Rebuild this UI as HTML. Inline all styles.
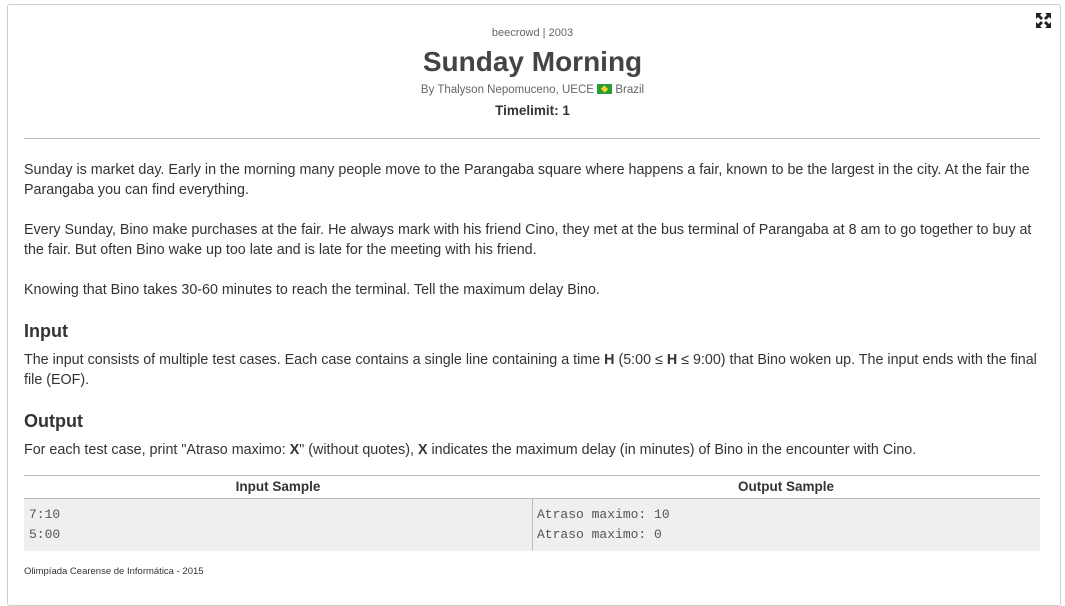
<!DOCTYPE html>
<html><head><meta charset="utf-8"><style>
body{margin:0;background:#fff;font-family:"Liberation Sans",sans-serif;color:#333;overflow:hidden;}
.box{position:absolute;left:7px;top:4px;width:1052px;height:600px;border:1px solid #ccc;border-radius:3px;}
.c{position:absolute;left:0;width:1065px;text-align:center;}
p{position:absolute;left:24px;width:1030px;margin:0;font-size:14.3px;line-height:20px;white-space:nowrap;}
h3{position:absolute;left:24px;margin:0;font-size:18px;font-weight:bold;color:#333;}
.mono{font-family:"Liberation Mono",monospace;font-size:13px;color:#555;}
</style></head><body>
<div class="box"></div>
<svg style="position:absolute;left:1036px;top:13px" width="15" height="15" viewBox="0 0 15 15" fill="#222"><path d="M0 0h6l-2 2 3 3-2 2-3-3-2 2zM15 0v6l-2-2-3 3-2-2 3-3-2-2zM0 15v-6l2 2 3-3 2 2-3 3 2 2zM15 15h-6l2-2-3-3 2-2 3 3 2-2z"/></svg>
<div class="c" style="top:27px;font-size:11px;color:#666">beecrowd | 2003</div>
<div class="c" style="top:46px;font-size:28px;font-weight:bold;color:#444">Sunday Morning</div>
<div class="c" style="top:84px;font-size:11.5px;color:#666">By Thalyson Nepomuceno, UECE <span style="display:inline-block;width:15px;height:10px;background:#2a9d3a;vertical-align:-1px;position:relative"><span style="position:absolute;left:4px;top:2px;width:7px;height:6px;background:#f3d32a;transform:rotate(45deg) scale(.8)"></span></span> Brazil</div>
<div class="c" style="top:103px;font-size:13.5px;font-weight:bold;color:#333">Timelimit: 1</div>
<div style="position:absolute;left:24px;top:138px;width:1016px;border-top:1px solid #bbb"></div>
<p style="top:160px">Sunday is market day. Early in the morning many people move to the Parangaba square where happens a fair, known to be the largest in the city. At the fair the<br>Parangaba you can find everything.</p>
<p style="top:220px">Every Sunday, Bino make purchases at the fair. He always mark with his friend Cino, they met at the bus terminal of Parangaba at 8 am to go together to buy at<br>the fair. But often Bino wake up too late and is late for the meeting with his friend.</p>
<p style="top:280px">Knowing that Bino takes 30-60 minutes to reach the terminal. Tell the maximum delay Bino.</p>
<h3 style="top:321px">Input</h3>
<p style="top:350px">The input consists of multiple test cases. Each case contains a single line containing a time <b>H</b> (5:00 ≤ <b>H</b> ≤ 9:00) that Bino woken up. The input ends with the final<br>file (EOF).</p>
<h3 style="top:411px">Output</h3>
<p style="top:440px">For each test case, print "Atraso maximo: <b>X</b>" (without quotes), <b>X</b> indicates the maximum delay (in minutes) of Bino in the encounter with Cino.</p>
<div style="position:absolute;left:24px;top:475px;width:1016px;height:74px;border-top:1px solid #bbb;border-bottom:1px solid #bbb">
<div style="position:absolute;left:0;top:0;width:508px;height:22px;line-height:22px;text-align:center;font-size:13.5px;font-weight:bold">Input Sample</div>
<div style="position:absolute;left:508px;top:0;width:508px;height:22px;line-height:22px;text-align:center;font-size:13.5px;font-weight:bold">Output Sample</div>
<div style="position:absolute;left:0;top:22px;width:1016px;height:52px;background:#efefef;border-top:1px solid #bbb"></div>
<div style="position:absolute;left:508px;top:23px;height:51px;border-left:1px solid #bbb"></div>
<div class="mono" style="position:absolute;left:5px;top:29px;line-height:20px">7:10<br>5:00</div>
<div class="mono" style="position:absolute;left:513px;top:29px;line-height:20px">Atraso maximo: 10<br>Atraso maximo: 0</div>
</div>
<div style="position:absolute;left:24px;top:566px;font-size:9.5px;color:#333">Olimpíada Cearense de Informática - 2015</div>
</body></html>
